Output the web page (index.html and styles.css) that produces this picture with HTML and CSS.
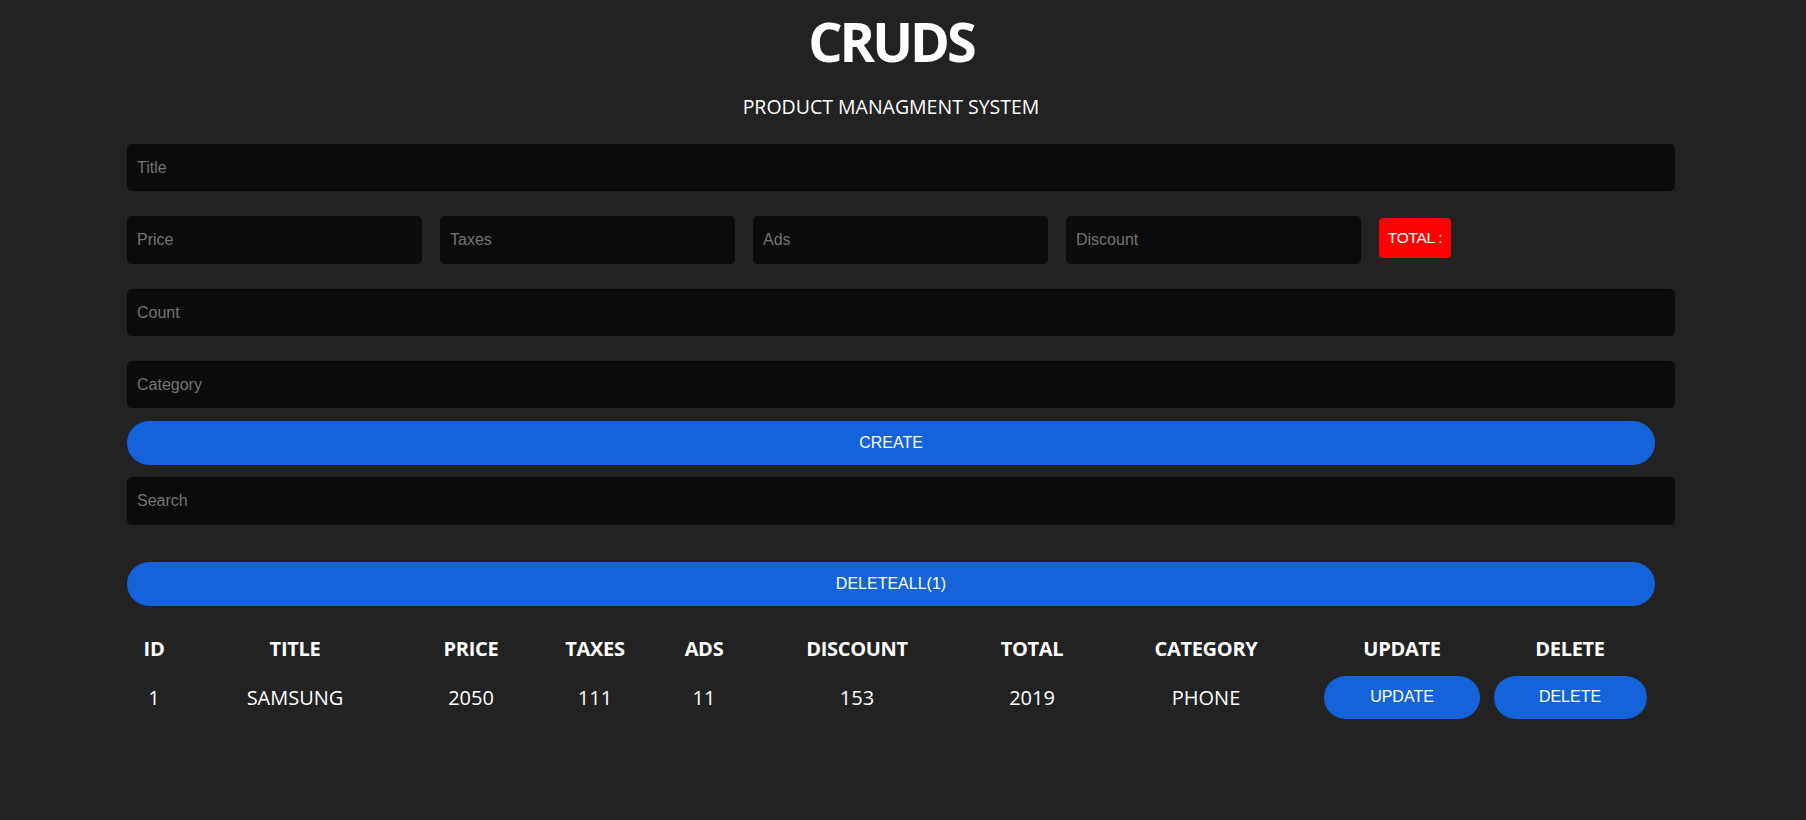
FILE: index.html
```html
<!DOCTYPE html>
<html lang="en">
<head>
<meta charset="utf-8">
<title>CRUDS</title>
<link rel="stylesheet" href="styles.css">
</head>
<body>
<div class="crud">
  <header class="head">
    <h1 class="brand">CRUDS</h1>
    <p class="subtitle">PRODUCT MANAGMENT SYSTEM</p>
  </header>

  <div class="inputs">
    <input class="field field-title" type="text" placeholder="Title">
    <div class="price-row">
      <input class="field field-price" type="number" placeholder="Price">
      <input class="field field-price" type="number" placeholder="Taxes">
      <input class="field field-price" type="number" placeholder="Ads">
      <input class="field field-price" type="number" placeholder="Discount">
      <small class="total">TOTAL :</small>
    </div>
    <input class="field field-count" type="number" placeholder="Count">
    <input class="field field-category" type="text" placeholder="Category">
    <button class="btn btn-block btn-create">CREATE</button>
  </div>

  <div class="output">
    <div class="search-block">
      <input class="field field-search" type="text" placeholder="Search">
    </div>
    <div class="delete-all">
      <button class="btn btn-block">DELETEALL(1)</button>
    </div>

    <table class="products">
      <colgroup>
        <col class="c-id"><col class="c-title"><col class="c-price"><col class="c-taxes"><col class="c-ads">
        <col class="c-discount"><col class="c-total"><col class="c-category"><col class="c-update"><col class="c-delete">
      </colgroup>
      <thead>
        <tr>
          <th>ID</th><th>TITLE</th><th>PRICE</th><th>TAXES</th><th>ADS</th>
          <th>DISCOUNT</th><th>TOTAL</th><th>CATEGORY</th><th>UPDATE</th><th>DELETE</th>
        </tr>
      </thead>
      <tbody>
        <tr>
          <td>1</td><td>SAMSUNG</td><td>2050</td><td>111</td><td>11</td>
          <td>153</td><td>2019</td><td>PHONE</td>
          <td><button class="btn btn-row btn-update">UPDATE</button></td>
          <td><button class="btn btn-row btn-delete">DELETE</button></td>
        </tr>
      </tbody>
    </table>
  </div>
</div>
</body>
</html>
```

FILE: styles.css
```css
* {
  margin: 0;
  padding: 0;
  box-sizing: border-box;
}

html, body {
  background: #222222;
}

body {
  color: #ffffff;
  font-family: "Open Sans", "Noto Sans", sans-serif;
  min-height: 820px;
}

.crud {
  width: 1528px;
  margin-left: 127px;
}

/* Heading */
.head {
  text-align: center;
  padding-top: 8px;
}

.brand {
  font-size: 54px;
  font-weight: 700;
  line-height: 66px;
  letter-spacing: -3px;
}

.subtitle {
  font-size: 19.5px;
  line-height: 24px;
  margin-top: 21px;
}

/* Inputs */
.inputs {
  display: flex;
  flex-direction: column;
  align-items: flex-start;
  margin-top: 25px;
}

.field {
  display: block;
  width: 1548px;
  height: 47px;
  padding: 0 10px;
  border: none;
  outline: none;
  border-radius: 5px;
  background: #0b0b0b;
  color: #ffffff;
  font-family: "Liberation Sans", Arial, sans-serif;
  font-size: 16px;
  -moz-appearance: textfield;
}

.field::placeholder {
  color: #757575;
}

.field::-webkit-outer-spin-button,
.field::-webkit-inner-spin-button {
  -webkit-appearance: none;
  margin: 0;
}

.price-row {
  display: flex;
  align-items: center;
  gap: 18px;
  margin-top: 25px;
}

.field-price {
  width: 295px;
  height: 48px;
}

.total {
  display: inline-flex;
  align-items: center;
  justify-content: center;
  width: 72px;
  height: 40px;
  margin-bottom: 4px;
  background: #ff0000;
  color: #ffffff;
  border-radius: 4px;
  font-family: "Liberation Sans", Arial, sans-serif;
  font-size: 15.5px;
  letter-spacing: -0.3px;
}

.field-count {
  margin-top: 25px;
}

.field-category {
  margin-top: 25px;
}

/* Buttons */
.btn {
  border: none;
  outline: none;
  cursor: pointer;
  background: #1463da;
  color: #ffffff;
  font-family: "Liberation Sans", Arial, sans-serif;
  font-size: 16px;
}

.btn-block {
  display: block;
  width: 1528px;
  height: 44px;
  border-radius: 22px;
}

.btn-create {
  margin-top: 13px;
}

.search-block {
  margin-top: 12px;
}

.field-search {
  height: 48px;
}

.delete-all {
  margin-top: 37px;
}

/* Table */
.products {
  table-layout: fixed;
  border-collapse: collapse;
  width: 1520px;
  margin-top: 20px;
  text-align: center;
  font-size: 20px;
}

.c-id { width: 54px; }
.c-title { width: 228px; }
.c-price { width: 124px; }
.c-taxes { width: 124px; }
.c-ads { width: 94px; }
.c-discount { width: 212px; }
.c-total { width: 138px; }
.c-category { width: 210px; }
.c-update { width: 182px; }
.c-delete { width: 154px; }

.products th {
  height: 44px;
  font-weight: 700;
  letter-spacing: -0.3px;
  vertical-align: middle;
}

.products td {
  height: 54px;
  font-weight: 400;
  vertical-align: middle;
}

.btn-row {
  height: 43px;
  border-radius: 22px;
  vertical-align: middle;
}

.btn-update {
  width: 156px;
}

.btn-delete {
  width: 153px;
}
```
